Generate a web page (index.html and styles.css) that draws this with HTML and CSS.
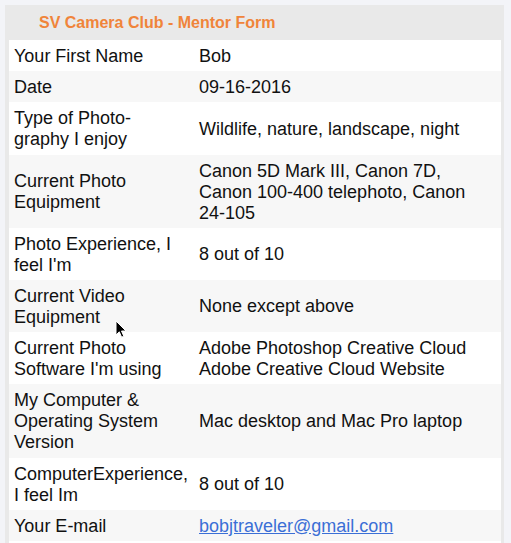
FILE: index.html
```html
<!DOCTYPE html>
<html>
<head>
<meta charset="utf-8">
<title>SV Camera Club - Mentor Form</title>
<link rel="stylesheet" href="styles.css">
</head>
<body>
<div class="panel">
  <div class="panel-header">SV Camera Club - Mentor Form</div>
  <table class="form-table">
    <tr><td class="label">Your First Name</td><td class="value">Bob</td></tr>
    <tr><td class="label">Date</td><td class="value">09-16-2016</td></tr>
    <tr><td class="label">Type of Photo-<br>graphy I enjoy</td><td class="value">Wildlife, nature, landscape, night</td></tr>
    <tr><td class="label">Current Photo<br>Equipment</td><td class="value">Canon 5D Mark III, Canon 7D,<br>Canon 100-400 telephoto, Canon<br>24-105</td></tr>
    <tr><td class="label">Photo Experience, I<br>feel I'm</td><td class="value">8 out of 10</td></tr>
    <tr><td class="label">Current Video<br>Equipment</td><td class="value">None except above</td></tr>
    <tr><td class="label">Current Photo<br>Software I'm using</td><td class="value">Adobe Photoshop Creative Cloud<br>Adobe Creative Cloud Website</td></tr>
    <tr><td class="label">My Computer &amp;<br>Operating System<br>Version</td><td class="value">Mac desktop and Mac Pro laptop</td></tr>
    <tr><td class="label">ComputerExperience,<br>I feel Im</td><td class="value">8 out of 10</td></tr>
    <tr><td class="label">Your E-mail</td><td class="value"><a href="#" class="email">bobjtraveler@gmail.com</a></td></tr>
    <tr><td class="label">&nbsp;</td><td class="value">&nbsp;</td></tr>
  </table>
</div>
<svg class="cursor" width="12" height="19" viewBox="0 0 12 19">
  <path d="M1 1 L1 15 L4.3 11.8 L6.6 17.2 L8.8 16.2 L6.5 11 L11 11 Z" fill="#000" stroke="#fff" stroke-width="1" stroke-linejoin="round"/>
</svg>
</body>
</html>
```

FILE: styles.css
```css
html, body {
  margin: 0;
  padding: 0;
}
body {
  background: #f3f4f8;
  font-family: "Liberation Sans", Arial, Helvetica, sans-serif;
  color: #111;
  overflow: hidden;
  height: 543px;
  position: relative;
}
.panel {
  margin: 5px 0 0 5px;
  width: 499px;
  background: #e9e9e9;
  padding: 0 3px 0 4px;
  box-sizing: border-box;
}
.panel-header {
  height: 35px;
  line-height: 36px;
  padding-left: 30px;
  font-size: 16px;
  font-weight: bold;
  color: #f0843a;
}
.form-table {
  width: 492px;
  border-collapse: collapse;
  border-spacing: 0;
  font-size: 18px;
  line-height: 21px;
}
.form-table tr:nth-child(odd) {
  background: #ffffff;
}
.form-table tr:nth-child(even) {
  background: #f7f7f7;
}
.form-table td {
  padding: 6px 5px 4.2px 5px;
  vertical-align: middle;
}
.form-table td.label {
  width: 175px;
  white-space: nowrap;
}
.email {
  color: #3b6fd6;
  text-decoration: underline;
}
.cursor {
  position: absolute;
  left: 115px;
  top: 320px;
}
```
